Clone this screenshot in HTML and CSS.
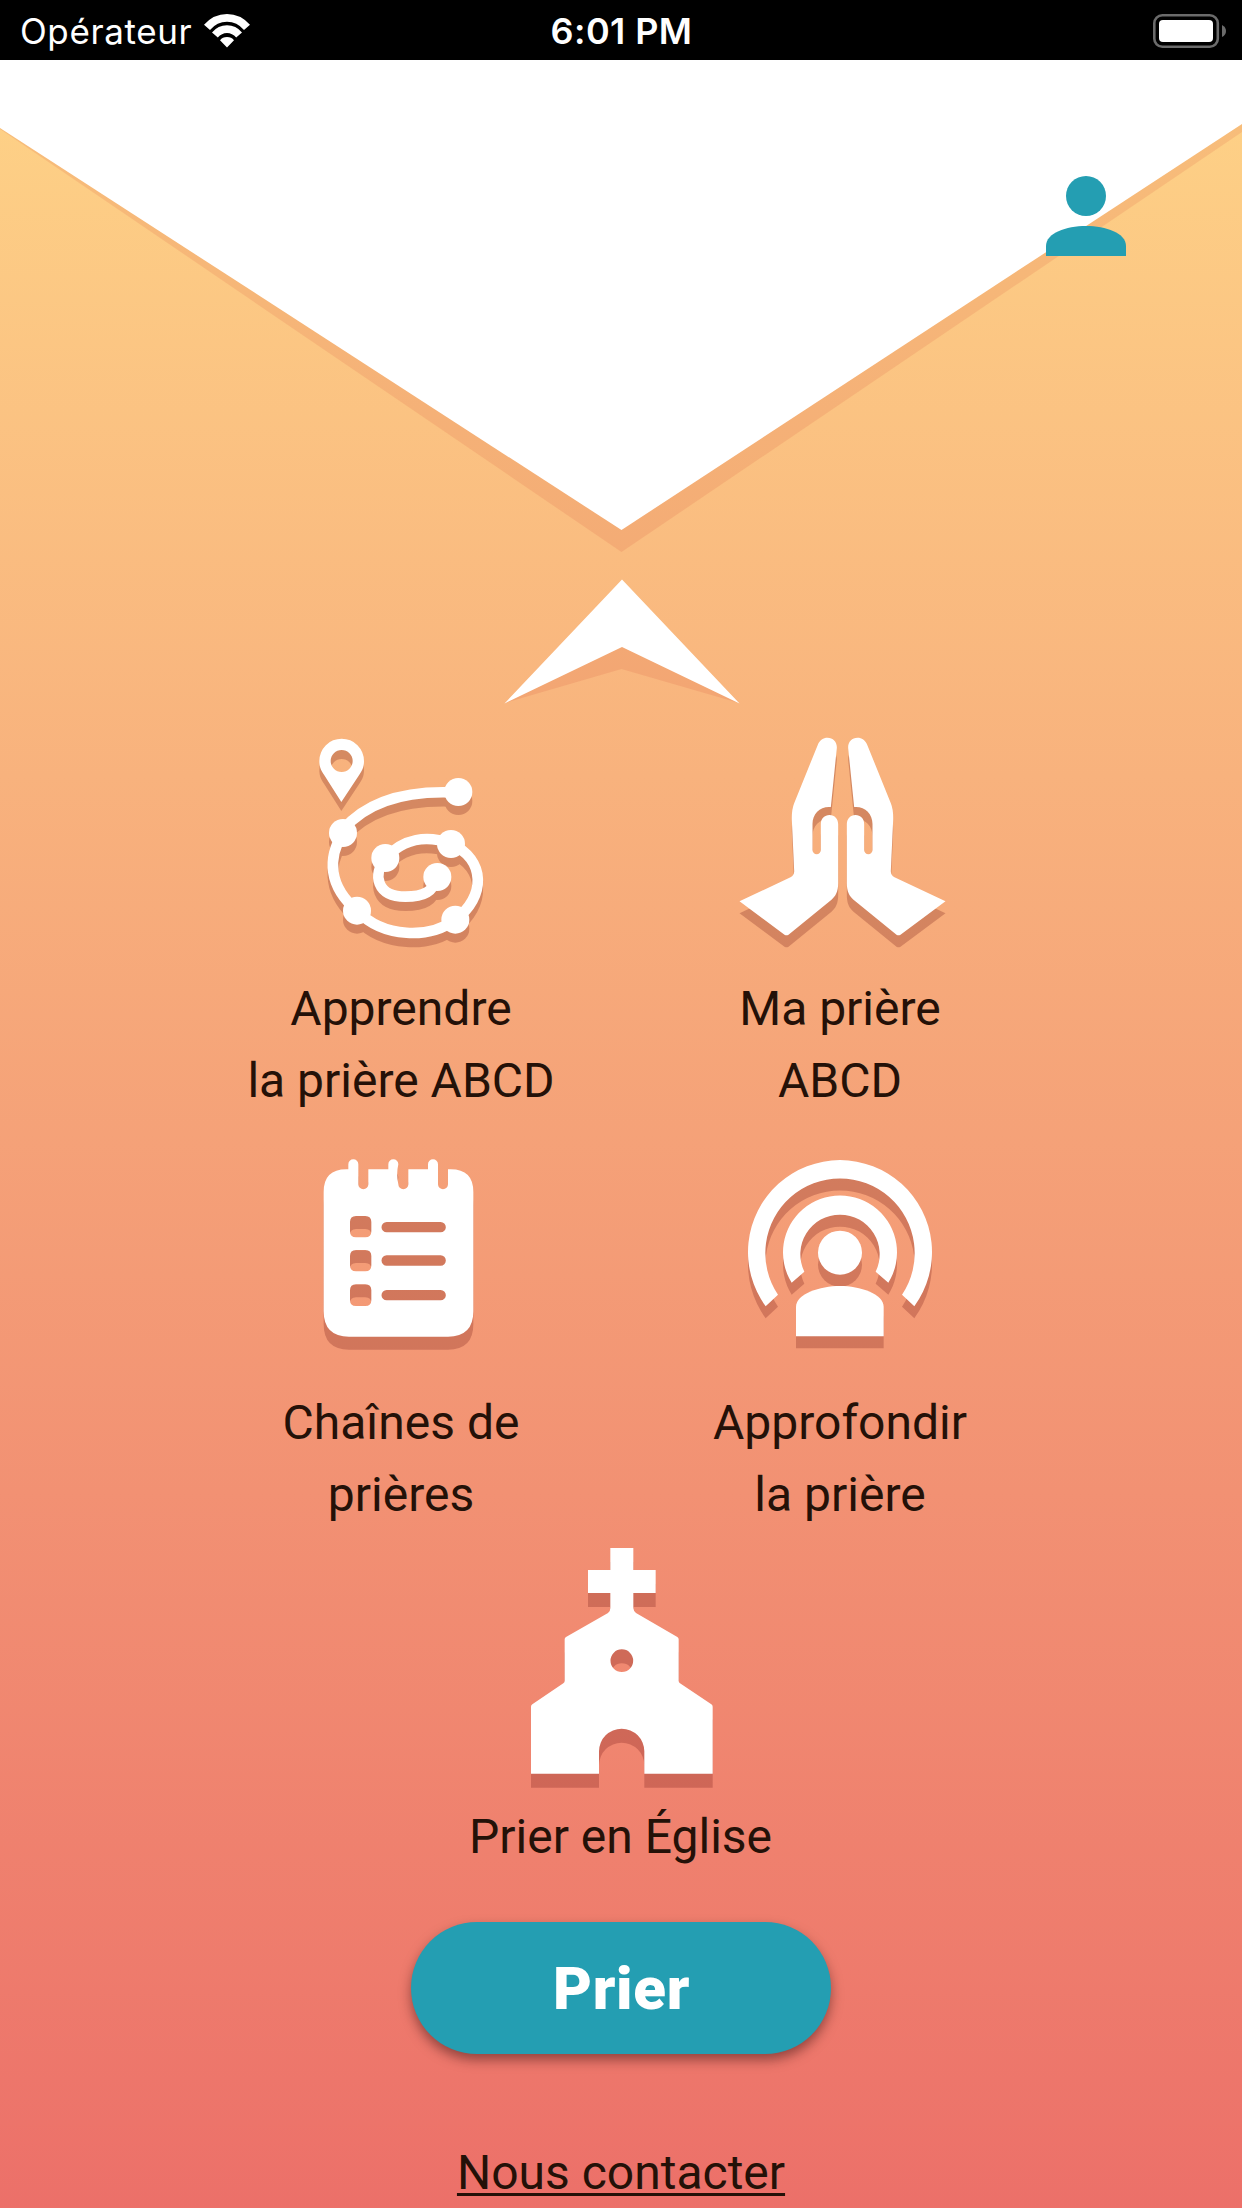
FILE: index.html
```html
<!DOCTYPE html>
<html lang="fr">
<head>
<meta charset="utf-8">
<title>Prier</title>
<link rel="stylesheet" href="styles.css">
</head>
<body>
<header class="status">
  <div class="status-left">
    <span class="carrier">Opérateur</span>
    <svg class="wifi" width="46" height="34" viewBox="0 0 46 34" aria-hidden="true">
      <path d="M0 10.8Q9.500 0 23 0T46 10.800L40 16Q33 7.800 23 7.800T6 16ZM8 18.500Q14 11.300 23 11.300T38 18.500L32.200 23.500Q28.300 19 23 19T13.800 23.500ZM16 26.200Q18.500 23 23 23T30 26.200L23 33.400Z" fill="#fff"/>
    </svg>
  </div>
  <span class="time">6:01 PM</span>
  <svg class="battery" width="74" height="34" viewBox="0 0 74 34" aria-hidden="true">
    <rect x="1.300" y="1.300" width="63.500" height="31.400" rx="8" fill="none" stroke="#6b6b6b" stroke-width="2.600"/>
    <rect x="6" y="6" width="54" height="22" rx="4" fill="#fff"/>
    <path d="M69 11q4 2 4 6t-4 6Z" fill="#6b6b6b"/>
  </svg>
</header>

<main class="screen">
  <div class="hero">
    <svg width="1242" height="660" viewBox="0 60 1242 660" aria-hidden="true">
      <path class="shade" d="M0 129L621.500 552L1242 132V60H0Z"/>
      <path d="M0 128L621.500 530L1242 124V60H0Z" fill="#fff"/>
      <path class="shade" d="M505 703L621.500 640L739 703L621.500 669Z"/>
      <path d="M622 579.500L739.500 703.500L622 647L504.500 703.500Z" fill="#fff"/>
    </svg>
    <a class="profile" href="#" aria-label="Profil">
      <svg width="80" height="80" viewBox="0 0 80 80">
        <circle cx="40" cy="20" r="20"/>
        <path d="M0 80V70C0 57 20 50 40 50S80 57 80 70V80Z"/>
      </svg>
    </a>
  </div>

  <nav class="menu">
    <a class="item" href="#">
      <svg class="icon icon-path" width="210" height="250" viewBox="-10 0 630 750">
        <path fill-rule="evenodd" d="M124 56A67 67 0 0 1 191 123C191 143 184 154 176 166L123 246L72 166C64 154 57 143 57 123A67 67 0 0 1 124 56ZM124 90A33 33 0 1 0 124 156A33 33 0 1 0 124 90Z"/>
        <path class="line" d="M474 218C330 210 205 238 128 329M128 339C80 415 85 500 170 572C250 656 388 656 465 599C557 530 557 420 452 371C380 345 310 355 256 414C215 465 230 530 315 530C370 530 400 515 411 471"/>
        <circle cx="474" cy="216" r="42"/><circle cx="128" cy="339" r="42"/>
        <circle cx="170" cy="572" r="42"/><circle cx="465" cy="599" r="42"/>
        <circle cx="452" cy="372" r="42"/><circle cx="255" cy="414" r="42"/>
        <circle cx="411" cy="471" r="42"/>
      </svg>
      <span class="label">Apprendre<br>la prière ABCD</span>
    </a>
    <a class="item" href="#">
      <svg class="icon icon-hands" width="240" height="250" viewBox="1.500 0 720 750">
        <path id="hand" d="M292 74C298 60 308 53 321 53C338 53 350 66 349 84L331 261C300 258 276 280 276 312V390A12.500 12.500 0 0 0 301 390V312C301 296 312 285 327 285C343 285 353 297 353 312V490C353 515 345 529 333 539L204 644Q198 648 192 644L57 544L210 472Q222 466 221 452L214 300Q213 270 221 250Z"/>
        <use href="#hand" transform="matrix(-1 0 0 1 732 0)"/>
      </svg>
      <span class="label">Ma prière<br>ABCD</span>
    </a>
    <a class="item" href="#">
      <svg class="icon icon-list" width="200" height="230" viewBox="6 -1 600 690">
        <path fill-rule="evenodd" d="M71 155Q71 87 139 87H145V72A15 15 0 0 1 175 72V132A15 15 0 0 0 205 132V87H265V72A15 15 0 0 1 295 72Q288 102 295 132A15 15 0 0 0 325 132V87H384V72A15 15 0 0 1 414 72V132A15 15 0 0 0 444 132V87H452Q520 87 520 155V513Q520 589 444 589H147Q71 589 71 513Z
          M168 227Q150 227 150 245V273Q150 291 168 291H196Q214 291 214 273V245Q214 227 196 227Z
          M168 329Q150 329 150 347V375Q150 393 168 393H196Q214 393 214 375V347Q214 329 196 329Z
          M168 432Q150 432 150 450V479Q150 497 168 497H196Q214 497 214 479V450Q214 432 196 432Z
          M260 245A15.500 15.500 0 0 0 260 276H422A15.500 15.500 0 0 0 422 245Z
          M260 345A15.500 15.500 0 0 0 260 376H422A15.500 15.500 0 0 0 422 345Z
          M260 449A15.500 15.500 0 0 0 260 480H422A15.500 15.500 0 0 0 422 449Z"/>
      </svg>
      <span class="label">Chaînes de<br>prières</span>
    </a>
    <a class="item" href="#">
      <svg class="icon icon-aura" width="240" height="230" viewBox="3 -1 720 690">
        <path d="M137 498A276 276 0 1 1 583 498L546 463A224 224 0 1 0 174 463Z"/>
        <path d="M215 427A171 171 0 1 1 505 427L467 394A119 119 0 1 0 253 394Z"/>
        <circle cx="360" cy="337" r="66"/>
        <path d="M228 588V500C228 460 300 437 360 437S491 460 491 500V588Z"/>
      </svg>
      <span class="label">Approfondir<br>la prière</span>
    </a>
    <a class="item item-wide" href="#">
      <svg class="icon icon-church" width="220" height="270" viewBox="3 3 660 810">
        <path fill-rule="evenodd" d="M301 54H370V120H437V189H370V234Q371 245 378 249L502 321Q506 323 506 328V452Q506 457 510 460L604 523Q608 526 608 530V731H403V664A68 68 0 0 0 267 664V731H63V530Q63 526 67 523L160 460Q164 457 164 452V328Q164 323 168 321L294 249Q301 245 301 234V189H234V120H301ZM335.500 358A34 34 0 1 0 335.500 426A34 34 0 1 0 335.500 358Z"/>
      </svg>
      <span class="label">Prier en Église</span>
    </a>
  </nav>

  <button class="pray" type="button">Prier</button>
  <a class="contact" href="#">Nous contacter</a>
</main>
</body>
</html>
```
FILE: styles.css
```css
* {
  box-sizing: border-box;
}

body {
  margin: 0;
  width: 1242px;
  height: 2208px;
  overflow: hidden;
  font-family: Roboto, "Liberation Sans", sans-serif;
  color: #241108;
}

a {
  color: inherit;
  text-decoration: none;
}

svg {
  display: block;
}

.status {
  display: grid;
  grid-template-columns: 1fr auto 1fr;
  align-items: center;
  height: 60px;
  padding: 2px 15px 0 20px;
  background: #000;
  color: #fff;
  font-family: Inter, "Liberation Sans", sans-serif;
  font-size: 35px;
}

.status-left {
  display: flex;
  align-items: center;
  gap: 12px;
}

.carrier {
  letter-spacing: 0.6px;
}

.wifi,
.battery {
  margin-top: -1px;
}

.time {
  margin-right: 4px;
  font-size: 36px;
  font-weight: 600;
  letter-spacing: 0.4px;
}

.battery {
  justify-self: end;
}

.screen {
  display: flex;
  flex-direction: column;
  align-items: center;
  height: 2148px;
  background: linear-gradient(#fed387, #ec7069);
}

.screen > * {
  flex-shrink: 0;
}

.hero {
  position: relative;
  height: 660px;
}

.shade {
  fill: rgba(205, 60, 50, 0.13);
}

.profile {
  position: absolute;
  top: 116px;
  right: 116px;
  fill: #249eb2;
}

.menu {
  display: grid;
  grid-template-columns: 439px 439px;
}

.item {
  display: flex;
  flex-direction: column;
  align-items: center;
  gap: 3px;
}

.item:nth-child(3),
.item:nth-child(4) {
  padding-top: 23px;
  gap: 17px;
}

.item-wide {
  grid-column: 1 / -1;
  gap: 0;
}

.icon {
  fill: #fff;
  overflow: visible;
  filter: drop-shadow(0 var(--drop) 0 rgba(107, 14, 15, 0.25));
}

.icon .line {
  fill: none;
  stroke: #fff;
  stroke-width: 32;
}

.icon-path { --drop: 9px; }
.icon-hands { --drop: 12px; }
.icon-list { --drop: 13.5px; }
.icon-aura { --drop: 12.5px; }
.icon-church { --drop: 14px; }

.label,
.contact {
  font-size: 48px;
  line-height: 72px;
  text-align: center;
}

.label {
  margin-right: 1px;
}

.pray {
  width: 420px;
  height: 132px;
  margin: 49px 0 83px;
  padding: 0 0 0 1px;
  border: 0;
  border-radius: 66px;
  background: #249eb2;
  box-shadow: 0 6px 12px rgba(60, 20, 20, 0.5);
  color: #fff;
  font: 900 60px Roboto, "Liberation Sans", sans-serif;
  letter-spacing: 0.7px;
}

.contact {
  text-decoration: underline;
  text-decoration-thickness: 3px;
  text-underline-offset: 4px;
  text-decoration-skip-ink: none;
}
```
